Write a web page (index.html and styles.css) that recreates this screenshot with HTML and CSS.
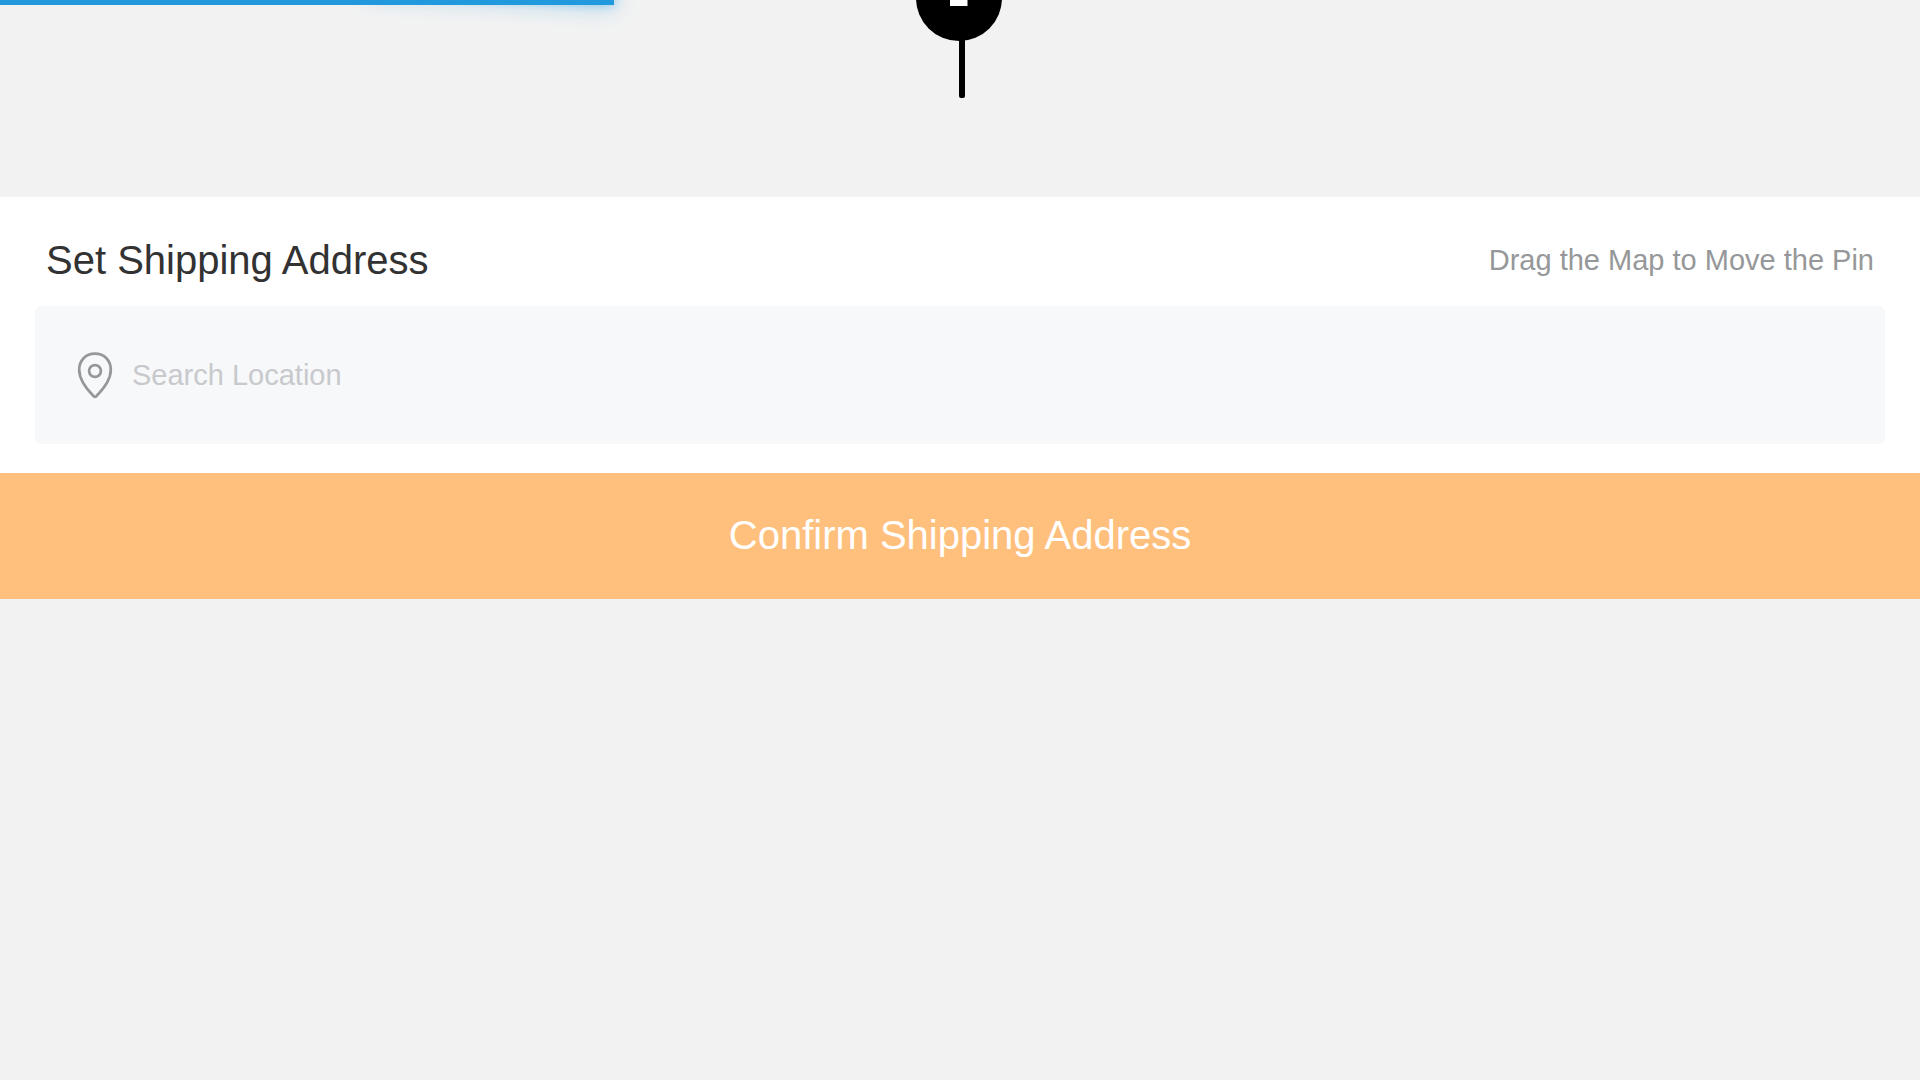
FILE: index.html
```html
<!DOCTYPE html>
<html lang="en">
<head>
<meta charset="utf-8">
<meta name="viewport" content="width=device-width, initial-scale=1">
<title>Set Shipping Address</title>
<link rel="stylesheet" href="styles.css">
</head>
<body>
<div class="progress" role="progressbar" aria-label="Loading" aria-valuenow="32" aria-valuemin="0" aria-valuemax="100">
  <div class="progress-bar" style="width: 32%"><div class="progress-peg"></div></div>
</div>
<main>
  <div class="map">
    <svg class="map-pin" width="88" height="98" viewBox="0 0 88 98" aria-hidden="true">
      <circle cx="43" cy="-2" r="43"/>
      <rect x="43" y="38" width="6" height="60" rx="2"/>
      <rect x="34" y="-12" width="17.500" height="18" fill="#fff"/>
    </svg>
  </div>
  <form class="address">
    <div class="address-panel">
      <div class="address-head">
        <h1 class="address-title">Set Shipping Address</h1>
        <p class="address-hint">Drag the Map to Move the Pin</p>
      </div>
      <label class="search">
        <svg class="search-icon" width="36" height="48" viewBox="0 0 36 48" fill="none" stroke="#969799" stroke-width="2.700" stroke-linejoin="round" aria-hidden="true">
          <path d="M18 2.600C8.600 2.600 2.200 9.500 2.200 18.800C2.200 28.700 9.500 38 16.700 45.200Q18 46.500 19.300 45.200C26.500 38 33.800 28.700 33.800 18.800C33.800 9.500 27.400 2.600 18 2.600Z"/>
          <circle cx="18" cy="20" r="5.900"/>
        </svg>
        <input class="search-input" type="text" placeholder="Search Location" aria-label="Search Location">
      </label>
    </div>
    <button class="confirm" type="button">Confirm Shipping Address</button>
  </form>
</main>
</body>
</html>
```
FILE: styles.css
```css
* {
  box-sizing: border-box;
}

body {
  margin: 0;
  overflow-x: hidden;
  background: #f2f2f2;
  color: #323233;
  font-family: "Liberation Sans", Arial, sans-serif;
}

/* Loading bar over the top edge */
.progress {
  position: fixed;
  top: 0;
  left: 0;
  width: 100%;
  height: 5px;
}

.progress-bar {
  position: relative;
  height: 100%;
  background: #2299dd;
}

.progress-peg {
  position: absolute;
  right: 0;
  width: 250px;
  height: 100%;
  box-shadow: 0 0 24px #2299dd, 0 0 12px #2299dd;
  transform: rotate(3deg) translateY(-9px);
}

.map {
  display: flex;
  justify-content: center;
  height: 197px;
}

.map-pin {
  display: block;
}

.address-panel {
  padding: 29px 35px;
  background: #fff;
}

.address-head {
  display: flex;
  align-items: center;
  justify-content: space-between;
  padding: 0 11px;
  height: 68px;
}

.address-title {
  margin: 0;
  font-size: 40px;
  font-weight: 400;
}

.address-hint {
  margin: 0;
  color: #969799;
  font-size: 29px;
}

.search {
  display: flex;
  align-items: center;
  gap: 19px;
  height: 138px;
  margin-top: 12px;
  padding: 0 42px;
  border-radius: 6px;
  background: #f7f8fa;
}

.search-icon {
  flex: none;
}

.search-input {
  flex: 1;
  min-width: 0;
  padding: 0;
  border: 0;
  outline: 0;
  background: transparent;
  color: #323233;
  font: inherit;
  font-size: 29px;
}

.search-input::placeholder {
  color: #c8c9cc;
}

.confirm {
  display: block;
  width: 100%;
  height: 126px;
  padding: 0 0 2px;
  border: 0;
  background: #ffc07d;
  color: #fff;
  font: inherit;
  font-size: 40px;
}
```
